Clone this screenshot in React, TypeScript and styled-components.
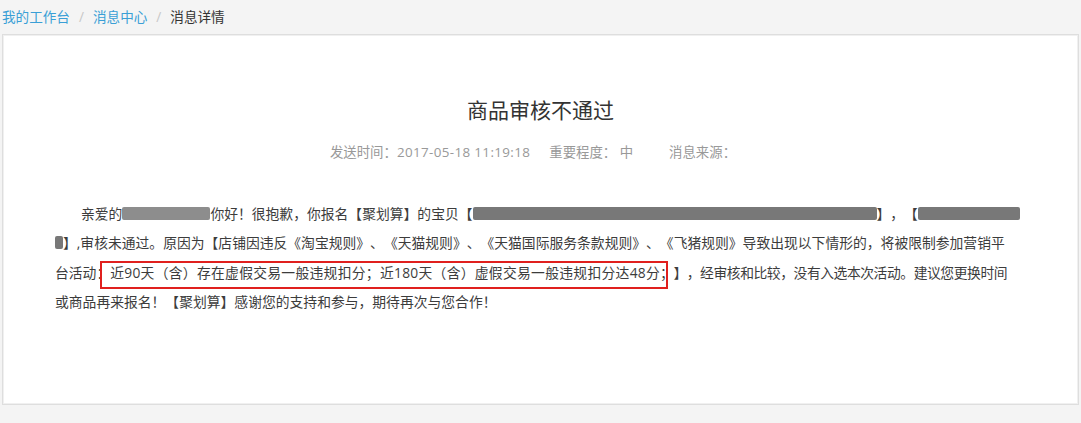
import React from "react";
import styled, { createGlobalStyle } from "styled-components";

const GlobalStyle = createGlobalStyle`
  html, body {
    margin: 0;
    padding: 0;
    background: #f4f4f4;
  }
  body {
    font-family: "Open Sans", "Noto Sans CJK SC", sans-serif;
    color: #333;
    text-spacing-trim: space-all;
  }
`;

const Page = styled.div`
  padding: 0 2px;
  height: 423px;
  box-sizing: border-box;
`;

const Breadcrumb = styled.nav`
  display: flex;
  align-items: center;
  height: 34px;
  font-size: 13.6px;
  padding-bottom: 2px;
  box-sizing: border-box;
`;

const Crumb = styled.span<{ $active?: boolean }>`
  color: ${(p) => (p.$active ? "#333" : "#3a9fd6")};
`;

const Sep = styled.span`
  color: #c8c8c8;
  margin: 0 9px;
`;

const Card = styled.section`
  background: #fff;
  border: 1px solid #dedede;
  box-shadow: inset 0 0 0 1px #f0f0f0;
  height: 371px;
  box-sizing: border-box;
  padding: 61px 52px 0 52px;
`;

const Title = styled.h1`
  margin: 0;
  text-align: center;
  font-size: 21px;
  font-weight: normal;
  line-height: 28px;
  color: #333;
`;

const Meta = styled.div`
  display: flex;
  justify-content: center;
  gap: 19px;
  margin-top: 18px;
  line-height: 20px;
  font-size: 13.4px;
  color: #999;
  padding-right: 15px;
`;

const MetaItem = styled.span<{ $gap?: number }>`
  margin-left: ${(p) => p.$gap ?? 0}px;
  white-space: pre;
`;

const Stamp = styled.span`
  letter-spacing: 0.37px;
`;

const Body = styled.p`
  margin: 37px 0 0;
  font-size: 13.8px;
  line-height: 29.3px;
  color: #3c3c3c;
  text-indent: 26px;
  white-space: nowrap;
`;

const Redact = styled.span<{ $w: number; $light?: boolean }>`
  display: inline-block;
  width: ${(p) => p.$w}px;
  height: 13px;
  vertical-align: -1px;
  background: ${(p) => (p.$light ? "#8d8d8d" : "#787878")};
  border-radius: 2px;
  text-indent: 0;
`;

const Marked = styled.span`
  border: 2px solid #e0201e;
  padding: 0 6px 5px 8px;
  margin: 0 -8px 0 -10px;
  letter-spacing: 0.28px;
`;

const Tail = styled.span`
  letter-spacing: -0.45px;
`;

export default function App() {
  return (
    <Page>
      <GlobalStyle />
      <Breadcrumb>
        <Crumb>我的工作台</Crumb>
        <Sep>/</Sep>
        <Crumb>消息中心</Crumb>
        <Sep>/</Sep>
        <Crumb $active>消息详情</Crumb>
      </Breadcrumb>
      <Card>
        <Title>商品审核不通过</Title>
        <Meta>
          <MetaItem>
            发送时间：<Stamp>2017-05-18 11:19:18</Stamp>
          </MetaItem>
          <MetaItem>重要程度： 中</MetaItem>
          <MetaItem $gap={17}>消息来源：</MetaItem>
        </Meta>
        <Body>
          亲爱的<Redact $w={88} $light />你好！很抱歉，你报名【聚划算】的宝贝【<Redact $w={404} />】，【<Redact $w={102} />
          <br />
          <Redact $w={8} />】,审核未通过。原因为【店铺因违反《淘宝规则》、《天猫规则》、《天猫国际服务条款规则》、《飞猪规则》导致出现以下情形的，将被限制参加营销平
          <br />
          台活动：<Marked>近90天（含）存在虚假交易一般违规扣分；近180天（含）虚假交易一般违规扣分达48分</Marked>
          <Tail>；】，经审核和比较，没有入选本次活动。建议您更换时间</Tail>
          <br />
          或商品再来报名！【聚划算】感谢您的支持和参与，期待再次与您合作！
        </Body>
      </Card>
    </Page>
  );
}
